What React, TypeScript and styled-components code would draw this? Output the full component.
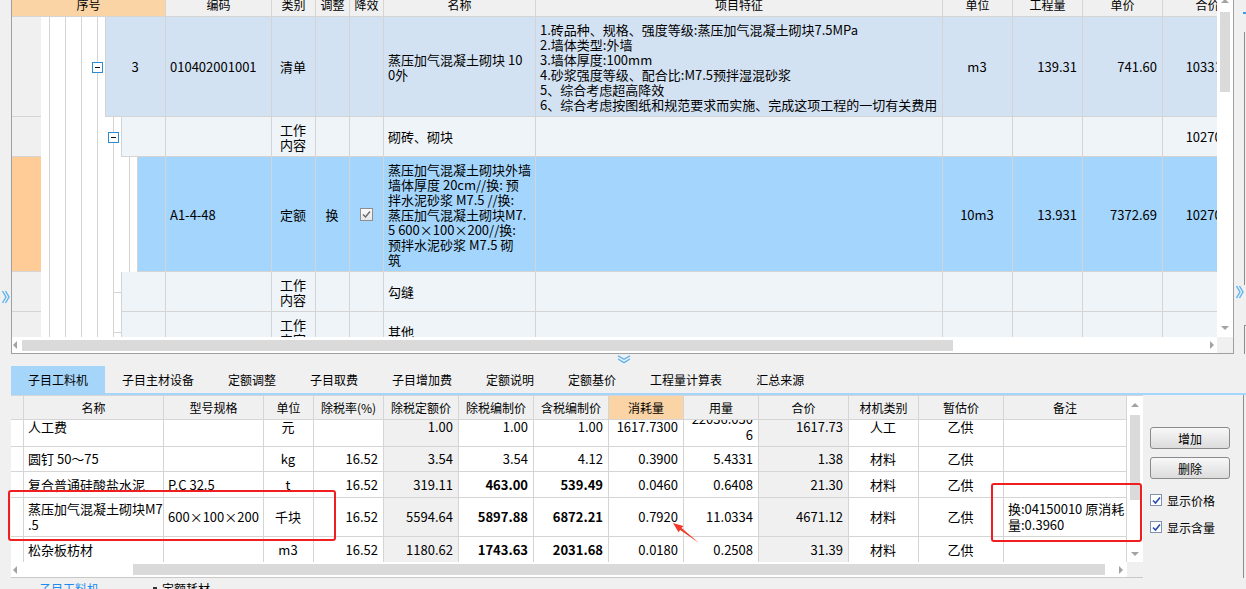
import { Fragment } from 'react'
import styled, { createGlobalStyle } from 'styled-components'

const GlobalStyle = createGlobalStyle`
  html, body { margin: 0; padding: 0; background: #f0f0f0; overflow: hidden; }
  body { font-family: "Noto Sans CJK SC", "Noto Sans", sans-serif; color: #000; }
  *, *::before, *::after { box-sizing: border-box; }
`

const LINE = '#d4d4d4'
const TOP_COLS = '29px 125px 106px 44px 34px 34px 152px 407px 70px 70px 80px 90px'
const BOTTOM_COLS = '13px 140px 100px 50px 70px 75px 75px 75px 75px 75px 90px 70px 85px 123px'

type Align = 'left' | 'center' | 'right'

const Screen = styled.div`
  position: relative;
  width: 1246px;
  height: 589px;
  overflow: hidden;
  display: flex;
  flex-direction: column;
  background: #f0f0f0;
`

/* ---------- top (bill of quantities tree grid) ---------- */

const TopArea = styled.div`
  display: flex;
  height: 354px;
  flex: none;
`

const LeftEdge = styled.div`
  width: 11px;
  flex: none;
  display: flex;
  flex-direction: column;
  padding: 290px 0 0 2px;
`

const RightEdge = styled.div`
  width: 12px;
  flex: none;
  display: flex;
  flex-direction: column;
`

const EdgeMark = styled.div`
  margin: 12px 0 0 9px;
  width: 3px;
  height: 2px;
  background: #3d9be9;
`

const EdgeRule = styled.div<{ $top: number; $h: number; $cap?: boolean }>`
  margin: ${p => p.$top}px 0 0 10px;
  width: 2px;
  height: ${p => p.$h}px;
  border-left: 1px solid #8c8c8c;
  border-top: ${p => (p.$cap ? '1px solid #8c8c8c' : 'none')};
`

const EdgeChevron = styled.div`
  margin-left: 2px;
  height: 14px;
  display: flex;
`

const TopPanel = styled.div`
  width: 1223px;
  flex: none;
  display: flex;
  flex-direction: column;
  border: 1px solid #a0a0a0;
  border-top: none;
  background: #fff;
`

const TopBody = styled.div`
  display: flex;
  height: 337px;
  flex: none;
`

const Viewport = styled.div`
  flex: 1;
  min-width: 0;
  overflow: hidden;
  background: #fff;
  display: flex;
  flex-direction: column;
`

const TopHeader = styled.div`
  display: grid;
  grid-template-columns: ${TOP_COLS};
  height: 25px;
  margin-top: -8px;
  flex: none;
`

const HeadCell = styled.div<{ $accent?: boolean; $span?: number }>`
  grid-column: span ${p => p.$span ?? 1};
  display: flex;
  align-items: center;
  justify-content: center;
  font-size: 12px;
  white-space: nowrap;
  overflow: hidden;
  background: ${p => (p.$accent ? '#fbd4a6' : '#f0f0f0')};
  border-right: 1px solid #d5d5d5;
  border-bottom: 1px solid #d5d5d5;
`

const TopRow = styled.div<{ $h: number }>`
  display: grid;
  grid-template-columns: ${TOP_COLS};
  height: ${p => p.$h}px;
  flex: none;
`

const Gutter = styled.div<{ $mark?: boolean }>`
  background: ${p => (p.$mark ? '#ffcb97' : '#f0f0f0')};
  border-bottom: 1px solid ${LINE};
`

const Tree = styled.div`
  display: flex;
  min-width: 0;
`

const Level = styled.div<{ $tick?: boolean }>`
  width: 16px;
  flex: none;
  display: flex;
  align-items: center;
  justify-content: center;
  background:
    ${p => (p.$tick ? `linear-gradient(${LINE}, ${LINE}) no-repeat 8px 50% / 8px 1px,` : '')}
    linear-gradient(${LINE}, ${LINE}) no-repeat 8px 0 / 1px 100%,
    #fff;
`

const Toggle = styled.span`
  width: 11px;
  height: 11px;
  border: 1px solid #2a8ad4;
  background: #fff;
  display: flex;
  align-items: center;
  justify-content: center;
  &::before {
    content: '';
    width: 5px;
    height: 1px;
    background: #111;
  }
`

const Cell = styled.div<{ $bg: string; $align?: Align }>`
  display: flex;
  align-items: center;
  justify-content: ${p => (p.$align === 'right' ? 'flex-end' : p.$align === 'center' ? 'center' : 'flex-start')};
  text-align: ${p => p.$align ?? 'left'};
  padding: 0 5px 0 4px;
  min-width: 0;
  overflow: hidden;
  white-space: nowrap;
  font-size: 13px;
  line-height: 15px;
  background: ${p => p.$bg};
  border-right: 1px solid ${LINE};
  border-bottom: 1px solid ${LINE};
`

const Node = styled(Cell)`
  flex: 1;
  border-left: 1px solid ${LINE};
`

const TickBox = styled.span`
  width: 13px;
  height: 13px;
  border: 1px solid #8e8e8e;
  background: linear-gradient(#fbfbfb, #e6e6e6);
  display: flex;
  align-items: center;
  justify-content: center;
`

const VScroll = styled.div`
  width: 16px;
  flex: none;
  background: #fff;
  display: flex;
  flex-direction: column;
  align-items: center;
`

const HScroll = styled.div<{ $h: number }>`
  height: ${p => p.$h}px;
  flex: none;
  display: flex;
  align-items: center;
  background: #fff;
`

const Thumb = styled.div<{ $top?: number; $left?: number; $len: number; $vertical?: boolean }>`
  flex: none;
  margin-top: ${p => p.$top ?? 0}px;
  margin-left: ${p => p.$left ?? 0}px;
  width: ${p => (p.$vertical ? 10 : p.$len)}px;
  height: ${p => (p.$vertical ? p.$len : 11)}px;
  background: #dadada;
`

const Spacer = styled.div`
  flex: 1;
`

const Corner = styled.div`
  width: 16px;
  align-self: stretch;
  background: #f0f0f0;
  flex: none;
`

const Arrow = styled.span<{ $dir: 'up' | 'down' | 'left' | 'right'; $m?: string }>`
  flex: none;
  width: 0;
  height: 0;
  margin: ${p => p.$m ?? '0'};
  border: 4px solid transparent;
  ${p => (p.$dir === 'up' ? 'border-top: 0; border-bottom-color: #a3a3a3;' : '')}
  ${p => (p.$dir === 'down' ? 'border-bottom: 0; border-top-color: #a3a3a3;' : '')}
  ${p => (p.$dir === 'left' ? 'border-left: 0; border-right-color: #a3a3a3;' : '')}
  ${p => (p.$dir === 'right' ? 'border-right: 0; border-left-color: #a3a3a3;' : '')}
`

/* ---------- splitter + tabs ---------- */

const Splitter = styled.div`
  height: 12px;
  flex: none;
  display: flex;
  padding: 1px 0 0 617px;
`

const TabBar = styled.div`
  height: 29px;
  flex: none;
  display: flex;
  margin-left: 11px;
  border-bottom: 2px solid #a6d5fa;
`

const Tab = styled.div<{ $active?: boolean }>`
  padding: 0 17px;
  display: flex;
  align-items: center;
  font-size: 12px;
  white-space: nowrap;
  background: ${p => (p.$active ? '#a6d5fa' : 'transparent')};
`

/* ---------- bottom (resources grid) ---------- */

const BottomArea = styled.div`
  height: 183px;
  flex: none;
  display: flex;
`

const BottomPanel = styled.div`
  width: 1132px;
  margin-left: 11px;
  flex: none;
  display: flex;
  flex-direction: column;
  background: #fff;
  border-top: 1px solid #d5d5d5;
  border-bottom: 1px solid #c8c8c8;
`

const BottomBody = styled.div`
  height: 166px;
  flex: none;
  display: flex;
`

const BottomHeader = styled.div`
  display: grid;
  grid-template-columns: ${BOTTOM_COLS};
  height: 24px;
  flex: none;
`

const RowsWindow = styled.div`
  flex: 1;
  overflow: hidden;
`

const MatRow = styled.div<{ $h: number; $lift?: number }>`
  display: grid;
  grid-template-columns: ${BOTTOM_COLS};
  height: ${p => p.$h}px;
  margin-top: ${p => -(p.$lift ?? 0)}px;
`

const MatCell = styled.div<{ $align?: Align; $shade?: boolean; $bold?: boolean }>`
  display: flex;
  align-items: center;
  justify-content: ${p => (p.$align === 'right' ? 'flex-end' : p.$align === 'center' ? 'center' : 'flex-start')};
  text-align: ${p => p.$align ?? 'left'};
  padding: 0 5px 0 4px;
  min-width: 0;
  overflow: hidden;
  white-space: nowrap;
  font-size: 13px;
  line-height: 16px;
  font-weight: ${p => (p.$bold ? 700 : 400)};
  background: ${p => (p.$shade ? '#f0f0f0' : '#fff')};
  border-right: 1px solid #d5d5d5;
  border-bottom: 1px solid #d5d5d5;
`

const SidePanel = styled.div`
  width: 101px;
  flex: none;
  display: flex;
  flex-direction: column;
  padding: 32px 0 0 7px;
  border-right: 1px solid #8c8c8c;
`

const SideButton = styled.button`
  width: 80px;
  height: 22px;
  margin: 0 0 8px;
  padding: 0;
  display: flex;
  align-items: center;
  justify-content: center;
  border: 1px solid #8a8a8a;
  border-radius: 3px;
  background: linear-gradient(#f8f8f8, #dcdcdc);
  font: 12px "Noto Sans CJK SC", sans-serif;
  color: #000;
`

const CheckList = styled.div`
  margin-top: 6px;
  display: flex;
  flex-direction: column;
  gap: 13px;
`

const CheckRow = styled.label`
  display: flex;
  align-items: center;
  gap: 5px;
  height: 14px;
  font-size: 12px;
  white-space: nowrap;
`

const CheckBox = styled.span`
  width: 12px;
  height: 12px;
  border: 1px solid #7f93b0;
  background: #fff;
  display: flex;
  align-items: center;
  justify-content: center;
`

const FooterTabs = styled.div`
  flex: none;
  display: flex;
  align-items: center;
  padding: 3px 0 0 39px;
  font-size: 12px;
  line-height: 16px;
  white-space: nowrap;
`

const FooterLink = styled.span<{ $active?: boolean; $gap?: number }>`
  margin-left: ${p => p.$gap ?? 0}px;
  color: ${p => (p.$active ? '#1a8cf0' : '#000')};
`

const FooterIcon = styled.span`
  margin-left: 54px;
  width: 4px;
  height: 5px;
  background: #333;
`

/* ---------- annotations drawn over the screenshot ---------- */

const RedBox = styled.div<{ $x: number; $y: number; $w: number; $h: number }>`
  position: absolute;
  left: ${p => p.$x}px;
  top: ${p => p.$y}px;
  width: ${p => p.$w}px;
  height: ${p => p.$h}px;
  border: 2px solid #f01e1e;
  border-radius: 3px;
  pointer-events: none;
`

const RedArrow = styled.svg`
  position: absolute;
  left: 665px;
  top: 515px;
`

function Lines({ rows }: { rows: string[] }) {
  return (
    <span>
      {rows.map((r, i) => (
        <Fragment key={i}>
          {i > 0 && <br />}
          {r}
        </Fragment>
      ))}
    </span>
  )
}

function DoubleRight() {
  return (
    <svg width="8" height="14" viewBox="0 0 8 14">
      <path d="M0.5 1 L4 7 L0.5 13 M3.5 1 L7 7 L3.5 13" fill="none" stroke="#5db3f0" strokeWidth="1.4" />
    </svg>
  )
}

function DoubleDown() {
  return (
    <svg width="14" height="9" viewBox="0 0 14 9">
      <path d="M1 0.8 L7 4.3 L13 0.8 M1 4 L7 7.7 L13 4" fill="none" stroke="#5db3f0" strokeWidth="1.4" />
    </svg>
  )
}

interface TopItem {
  h: number
  bg: string
  levels: number
  toggle?: boolean
  tick?: boolean
  mark?: boolean
  seq?: string
  code?: string
  kind: string[]
  adj?: string
  eff?: boolean
  name: string[]
  feat?: string[]
  unit?: string
  qty?: string
  price?: string
  total?: string
}

const TOP_ROWS: TopItem[] = [
  {
    h: 100, bg: '#d3e2f2', levels: 4, toggle: true, seq: '3', code: '010402001001', kind: ['清单'],
    name: ['蒸压加气混凝土砌块 10', '0外'],
    feat: [
      '1.砖品种、规格、强度等级:蒸压加气混凝土砌块7.5MPa',
      '2.墙体类型:外墙',
      '3.墙体厚度:100mm',
      '4.砂浆强度等级、配合比:M7.5预拌湿混砂浆',
      '5、综合考虑超高降效',
      '6、综合考虑按图纸和规范要求而实施、完成这项工程的一切有关费用',
    ],
    unit: 'm3', qty: '139.31', price: '741.60', total: '103312.30',
  },
  { h: 40, bg: '#eff4f8', levels: 5, toggle: true, kind: ['工作', '内容'], name: ['砌砖、砌块'], total: '102708.94' },
  {
    h: 115, bg: '#a4d5fc', levels: 6, mark: true, code: 'A1-4-48', kind: ['定额'], adj: '换', eff: true,
    name: [
      '蒸压加气混凝土砌块外墙',
      '墙体厚度 20cm//换: 预',
      '拌水泥砂浆 M7.5 //换:',
      '蒸压加气混凝土砌块M7.',
      '5 600×100×200//换:',
      '预拌水泥砂浆 M7.5 砌',
      '筑',
    ],
    unit: '10m3', qty: '13.931', price: '7372.69', total: '102708.94',
  },
  { h: 40, bg: '#eff4f8', levels: 5, tick: true, kind: ['工作', '内容'], name: ['勾缝'] },
  { h: 40, bg: '#eff4f8', levels: 5, tick: true, kind: ['工作', '内容'], name: ['其他'] },
]

const TOP_HEADS = ['编码', '类别', '调整', '降效', '名称', '项目特征', '单位', '工程量', '单价', '合价']

const TABS = ['子目工料机', '子目主材设备', '定额调整', '子目取费', '子目增加费', '定额说明', '定额基价', '工程量计算表', '汇总来源']

const MAT_HEADS = ['名称', '型号规格', '单位', '除税率(%)', '除税定额价', '除税编制价', '含税编制价', '消耗量', '用量', '合价', '材机类别', '暂估价', '备注']

interface MatItem {
  h: number
  lift?: number
  name: string[]
  spec: string
  unit: string
  rate: string
  base: string
  ex: string
  inc: string
  use: string
  amount: string[]
  total: string
  kind: string
  supply: string
  note: string[]
  bold?: boolean
}

const MATERIALS: MatItem[] = [
  { h: 40, lift: 13, name: ['人工费'], spec: '', unit: '元', rate: '', base: '1.00', ex: '1.00', inc: '1.00', use: '1617.7300', amount: ['22036.030', '6'], total: '1617.73', kind: '人工', supply: '乙供', note: [] },
  { h: 25, name: ['圆钉 50～75'], spec: '', unit: 'kg', rate: '16.52', base: '3.54', ex: '3.54', inc: '4.12', use: '0.3900', amount: ['5.4331'], total: '1.38', kind: '材料', supply: '乙供', note: [] },
  { h: 26, name: ['复合普通硅酸盐水泥'], spec: 'P.C 32.5', unit: 't', rate: '16.52', base: '319.11', ex: '463.00', inc: '539.49', use: '0.0460', amount: ['0.6408'], total: '21.30', kind: '材料', supply: '乙供', note: [], bold: true },
  { h: 39, name: ['蒸压加气混凝土砌块M7', '.5'], spec: '600×100×200', unit: '千块', rate: '16.52', base: '5594.64', ex: '5897.88', inc: '6872.21', use: '0.7920', amount: ['11.0334'], total: '4671.12', kind: '材料', supply: '乙供', note: ['换:04150010 原消耗', '量:0.3960'], bold: true },
  { h: 26, name: ['松杂板枋材'], spec: '', unit: 'm3', rate: '16.52', base: '1180.62', ex: '1743.63', inc: '2031.68', use: '0.0180', amount: ['0.2508'], total: '31.39', kind: '材料', supply: '乙供', note: [], bold: true },
]

export default function App() {
  return (
    <Screen>
      <GlobalStyle />

      <TopArea>
        <LeftEdge>
          <DoubleRight />
        </LeftEdge>

        <TopPanel>
          <TopBody>
            <Viewport>
              <TopHeader>
                <HeadCell $accent $span={2}>序号</HeadCell>
                {TOP_HEADS.map(h => (
                  <HeadCell key={h}>{h}</HeadCell>
                ))}
              </TopHeader>

              {TOP_ROWS.map((r, i) => (
                <TopRow key={i} $h={r.h}>
                  <Gutter $mark={r.mark} />
                  <Tree>
                    {Array.from({ length: r.levels }, (_, l) => (
                      <Level key={l} $tick={r.tick && l === r.levels - 1}>
                        {r.toggle && l === r.levels - 1 && <Toggle />}
                      </Level>
                    ))}
                    <Node $bg={r.bg} $align="center">{r.seq}</Node>
                  </Tree>
                  <Cell $bg={r.bg}>{r.code}</Cell>
                  <Cell $bg={r.bg} $align="center"><Lines rows={r.kind} /></Cell>
                  <Cell $bg={r.bg} $align="center">{r.adj}</Cell>
                  <Cell $bg={r.bg} $align="center">
                    {r.eff && (
                      <TickBox>
                        <svg width="9" height="9" viewBox="0 0 9 9">
                          <path d="M1 4.5 L3.5 7 L8 1.5" fill="none" stroke="#6b6b6b" strokeWidth="1.5" />
                        </svg>
                      </TickBox>
                    )}
                  </Cell>
                  <Cell $bg={r.bg}><Lines rows={r.name} /></Cell>
                  <Cell $bg={r.bg}><Lines rows={r.feat ?? []} /></Cell>
                  <Cell $bg={r.bg} $align="center">{r.unit}</Cell>
                  <Cell $bg={r.bg} $align="right">{r.qty}</Cell>
                  <Cell $bg={r.bg} $align="right">{r.price}</Cell>
                  <Cell $bg={r.bg} $align="right">{r.total}</Cell>
                </TopRow>
              ))}
            </Viewport>

            <VScroll>
              <Arrow $dir="up" $m="-1px 0 0" />
              <Thumb $vertical $top={9} $len={80} />
              <Spacer />
              <Arrow $dir="down" $m="0 0 7px" />
            </VScroll>
          </TopBody>

          <HScroll $h={16}>
            <Arrow $dir="left" $m="0 0 0 1px" />
            <Thumb $left={5} $len={931} />
            <Spacer />
            <Arrow $dir="right" $m="0 3px 0 0" />
            <Corner />
          </HScroll>
        </TopPanel>

        <RightEdge>
          <EdgeMark />
          <EdgeRule $top={18} $h={258} />
          <EdgeChevron>
            <DoubleRight />
          </EdgeChevron>
          <EdgeRule $top={26} $h={30} $cap />
        </RightEdge>
      </TopArea>

      <Splitter>
        <DoubleDown />
      </Splitter>

      <TabBar>
        {TABS.map((t, i) => (
          <Tab key={t} $active={i === 0}>{t}</Tab>
        ))}
      </TabBar>

      <BottomArea>
        <BottomPanel>
          <BottomBody>
            <Viewport>
              <BottomHeader>
                <HeadCell />
                {MAT_HEADS.map(h => (
                  <HeadCell key={h} $accent={h === '消耗量'}>{h}</HeadCell>
                ))}
              </BottomHeader>
              <RowsWindow>
                {MATERIALS.map((m, i) => (
                  <MatRow key={i} $h={m.h} $lift={m.lift}>
                    <MatCell />
                    <MatCell><Lines rows={m.name} /></MatCell>
                    <MatCell>{m.spec}</MatCell>
                    <MatCell $align="center">{m.unit}</MatCell>
                    <MatCell $align="right">{m.rate}</MatCell>
                    <MatCell $align="right" $shade>{m.base}</MatCell>
                    <MatCell $align="right" $bold={m.bold}>{m.ex}</MatCell>
                    <MatCell $align="right" $bold={m.bold}>{m.inc}</MatCell>
                    <MatCell $align="right">{m.use}</MatCell>
                    <MatCell $align="right"><Lines rows={m.amount} /></MatCell>
                    <MatCell $align="right" $shade>{m.total}</MatCell>
                    <MatCell $align="center">{m.kind}</MatCell>
                    <MatCell $align="center">{m.supply}</MatCell>
                    <MatCell><Lines rows={m.note} /></MatCell>
                  </MatRow>
                ))}
              </RowsWindow>
            </Viewport>

            <VScroll>
              <Arrow $dir="up" $m="7px 0 0" />
              <Thumb $vertical $top={8} $len={85} />
              <Spacer />
              <Arrow $dir="down" $m="0 0 6px" />
            </VScroll>
          </BottomBody>

          <HScroll $h={15}>
            <Arrow $dir="left" $m="0 0 0 2px" />
            <Thumb $left={116} $len={972} />
            <Spacer />
            <Arrow $dir="right" $m="0 4px 0 0" />
            <Corner />
          </HScroll>
        </BottomPanel>

        <SidePanel>
          <SideButton type="button">增加</SideButton>
          <SideButton type="button">删除</SideButton>
          <CheckList>
            {['显示价格', '显示含量'].map(label => (
              <CheckRow key={label}>
                <CheckBox>
                  <svg width="9" height="9" viewBox="0 0 9 9">
                    <path d="M1 4.5 L3.5 7 L8 1.5" fill="none" stroke="#2350a8" strokeWidth="1.6" />
                  </svg>
                </CheckBox>
                {label}
              </CheckRow>
            ))}
          </CheckList>
        </SidePanel>
      </BottomArea>

      <FooterTabs>
        <FooterLink $active>子目工料机</FooterLink>
        <FooterIcon />
        <FooterLink $gap={5}>定额耗材</FooterLink>
      </FooterTabs>

      <RedBox $x={8} $y={490} $w={328} $h={51} />
      <RedBox $x={991} $y={483} $w={151} $h={59} />
      <RedArrow width="40" height="34" viewBox="0 0 40 34">
        <polygon points="8,8 18.4,10.9 16.6,13.1 34,28 15.2,15 13.5,17.3" fill="#f03a2a" />
      </RedArrow>
    </Screen>
  )
}
